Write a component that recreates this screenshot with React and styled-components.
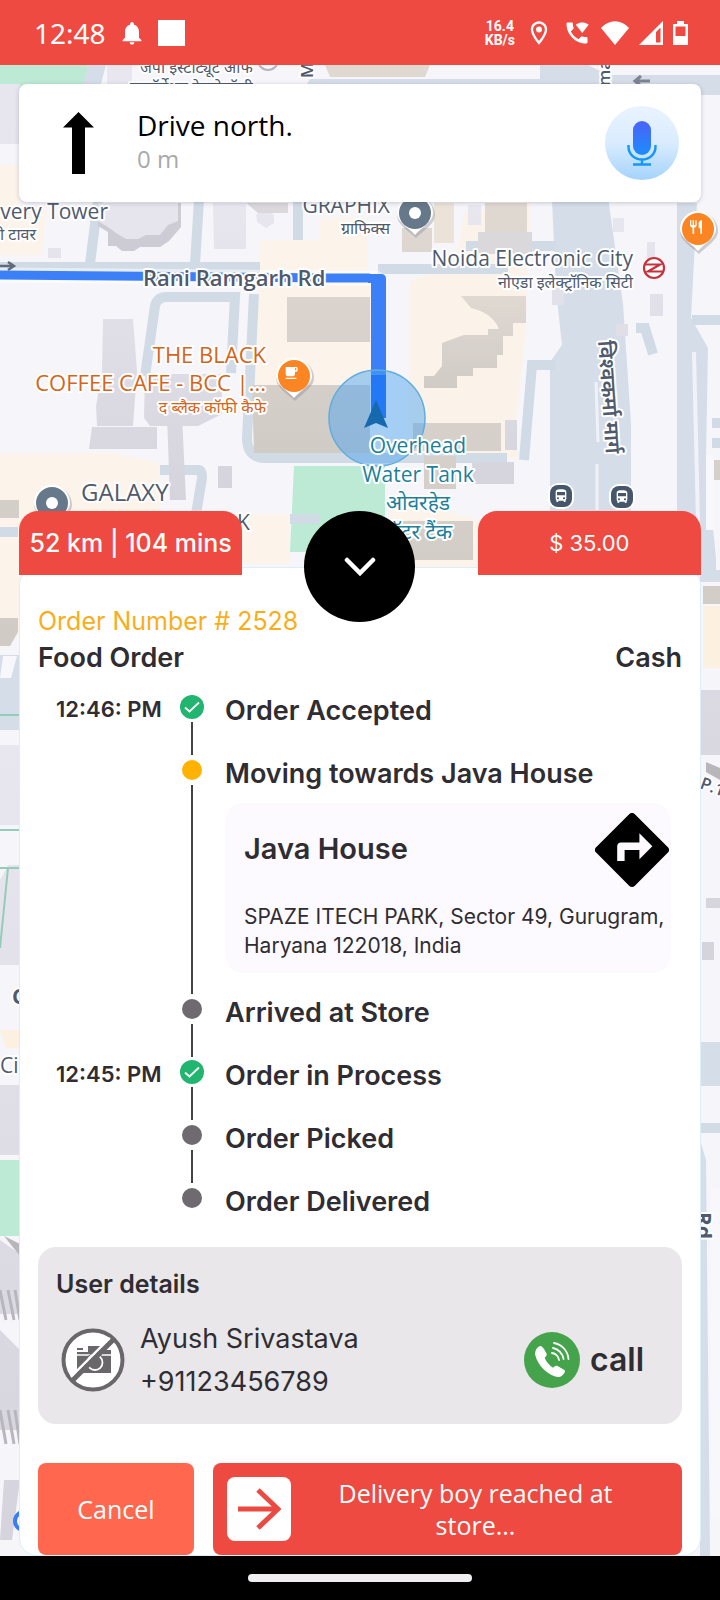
import React from 'react';
import styled, { createGlobalStyle, css } from 'styled-components';
import {
    MdNotifications,
    MdOutlineLocationOn,
    MdWifiCalling,
    MdLocalCafe,
    MdRestaurant,
    MdDirectionsBus,
} from 'react-icons/md';

const red = '#ef4a41';
const ink = '#2f2d32';
const uiFont = 'Inter, "Noto Sans", sans-serif';
const mapFont = '"Open Sans", "Noto Sans", "Noto Sans Devanagari", sans-serif';

const GlobalStyle = createGlobalStyle`
    * {
        box-sizing: border-box;
    }
    body {
        margin: 0;
        background: black;
        color: ${ink};
        font-family: ${uiFont};
    }
    button {
        border: none;
        padding: 0;
        background: none;
        font: inherit;
        color: inherit;
        cursor: pointer;
    }
    h2, h3, h4, p, ol {
        margin: 0;
        padding: 0;
    }
    svg {
        display: block;
    }
`

const Screen = styled.div`
    min-height: 100vh;
    display: flex;
    flex-direction: column;
`

/* status bar */

const StatusBar = styled.header`
    height: 65px;
    padding: 0 32px 0 34px;
    display: flex;
    align-items: center;
    justify-content: space-between;
    background: ${red};
    color: white;
`

const StatusGroup = styled.div`
    display: flex;
    align-items: center;
    gap: ${props => props.$gap}px;
`

const Clock = styled.time`
    font-family: "Noto Sans", sans-serif;
    font-size: 28px;
    line-height: 32px;
`

const WhiteSquare = styled.span`
    width: 27px;
    height: 26px;
    background: white;
`

const NetSpeed = styled.div`
    font-family: Roboto, sans-serif;
    font-size: 14px;
    line-height: 14px;
    font-weight: 700;
    text-align: center;
`

/* map and what floats on it */

const Stage = styled.main`
    flex: 1;
    display: grid;
    grid-template-columns: minmax(0, 1fr);
    overflow: hidden;
`

const MapCanvas = styled.svg`
    grid-area: 1 / 1;
    width: 100%;
    height: 0;
    min-height: 100%;
    font-family: ${mapFont};
`

const MapText = styled.text`
    fill: ${props => props.$color || '#4f5a6c'};
    font-size: ${props => props.$size || 21}px;
    font-weight: ${props => props.$weight || 400};
    stroke: white;
    stroke-width: 4px;
    stroke-linejoin: round;
    paint-order: stroke;
`

const Overlay = styled.div`
    grid-area: 1 / 1;
    z-index: 1;
    padding: 19px 19px 0;
    display: flex;
    flex-direction: column;
    justify-content: space-between;
    gap: 200px;
`

const DirectionCard = styled.section`
    height: 118px;
    padding: 0 22px 0 44px;
    display: flex;
    align-items: center;
    border-radius: 8px;
    background: white;
    box-shadow: 0 1px 4px rgba(60, 60, 80, 0.25);
`

const DirectionText = styled.div`
    flex: 1;
    margin-left: 43px;
    padding-bottom: 5px;
`

const Direction = styled.h2`
    color: black;
    font-family: "Open Sans", sans-serif;
    font-size: 28px;
    line-height: 36px;
    font-weight: 400;
`

const Distance = styled.p`
    color: #aaa9ad;
    font-family: "Open Sans", sans-serif;
    font-size: 24px;
    line-height: 32px;
`

/* bottom sheet */

const TabRow = styled.div`
    position: relative;
    z-index: 1;
    height: 64px;
    margin-bottom: -8px;
    display: grid;
    grid-template-columns: 1fr 1fr 1fr;
    gap: 6px;
    justify-items: center;
`

const Tab = styled.div`
    width: 100%;
    height: 64px;
    border-radius: 19px 19px 0 0;
    display: flex;
    align-items: center;
    justify-content: center;
    background: ${red};
    color: white;
    font-size: ${props => props.$size}px;
    line-height: 32px;
    font-weight: ${props => props.$weight};
    white-space: nowrap;
`

const CollapseButton = styled.button`
    width: 111px;
    height: 111px;
    border-radius: 50%;
    display: flex;
    align-items: center;
    justify-content: center;
    background: black;
`

const Sheet = styled.section`
    padding: 35px 18px 0;
    border: 1px solid #dceefa;
    border-radius: 18px;
    background: white;
`

const OrderNumber = styled.h2`
    color: #f9ae19;
    font-size: 25px;
    line-height: 36px;
    font-weight: 400;
`

const OrderMeta = styled.div`
    display: flex;
    justify-content: space-between;
    font-size: 27px;
    line-height: 38px;
    font-weight: 600;
`

const Timeline = styled.ol`
    margin-top: 15px;
    padding: 0 11px 0 18px;
    list-style: none;
`

const Step = styled.li`
    min-height: ${props => (props.$last ? 48 : 63)}px;
    display: grid;
    grid-template-columns: 112px 47px minmax(0, 1fr);
`

const StepTime = styled.time`
    padding-top: 1px;
    font-size: 22px;
    line-height: 32px;
    font-weight: 600;
    white-space: nowrap;
`

const StepRail = styled.div`
    display: flex;
    flex-direction: column;
    align-items: center;
`

const MarkerSlot = styled.div`
    height: 30px;
    display: flex;
    align-items: center;
`

const Dot = styled.span`
    width: 20px;
    height: 20px;
    border-radius: 50%;
    background: ${props => props.$color};
`

const RailLine = styled.span`
    flex: 1;
    width: 2px;
    background: #444247;
`

const StepBody = styled.div`
    padding-left: 10px;
`

const StepTitle = styled.h3`
    font-size: 27px;
    line-height: 38px;
    font-weight: 600;
`

const StoreCard = styled.div`
    margin: 10px 0 21px;
    padding: 10px 2px 13px 19px;
    border-radius: 18px;
    background: #fcfaff;
`

const StoreHead = styled.div`
    display: flex;
    align-items: center;
    justify-content: space-between;
`

const StoreName = styled.h4`
    padding-bottom: 3px;
    font-size: 29px;
    line-height: 38px;
    font-weight: 600;
`

const StoreAddress = styled.p`
    margin-top: 15px;
    font-size: 21px;
    line-height: 29px;
`

const UserCard = styled.section`
    margin-top: 16px;
    padding: 18px 38px 21px 18px;
    border-radius: 18px;
    background: #e9e7ea;
`

const UserHeading = styled.h3`
    font-size: 25px;
    line-height: 38px;
    font-weight: 600;
`

const UserRow = styled.div`
    margin-top: 14px;
    padding-left: 5px;
    display: flex;
    align-items: center;
`

const UserText = styled.div`
    flex: 1;
    padding-left: 15px;
    font-size: 27px;
    line-height: 43px;
`

const CallButton = styled.button`
    display: flex;
    align-items: center;
    gap: 10px;
    font-size: 32px;
    line-height: 36px;
    font-weight: 600;
`

const Actions = styled.div`
    margin-top: 39px;
    display: grid;
    grid-template-columns: 156fr 469fr;
    gap: 19px;
`

const actionStyle = css`
    height: 92px;
    border-radius: 8px;
    color: white;
    font-family: "Open Sans", sans-serif;
    font-size: 25px;
    line-height: 32px;
`

const CancelButton = styled.button`
    ${actionStyle}
    background: #ff674f;
`

const ReachedButton = styled.button`
    ${actionStyle}
    padding: 0 14px;
    display: flex;
    align-items: center;
    background: ${red};
`

const ArrowBox = styled.span`
    width: 64px;
    height: 64px;
    border-radius: 8px;
    display: flex;
    align-items: center;
    justify-content: center;
    background: white;
`

const ReachedLabel = styled.span`
    flex: 1;
    padding: 0 40px 0 32px;
`

const SystemNav = styled.footer`
    height: 44px;
    display: flex;
    align-items: center;
    justify-content: center;
    background: black;
`

const HomePill = styled.span`
    width: 31%;
    height: 8px;
    border-radius: 4px;
    background: #f0eef1;
`

const WifiIcon = () => (
    <svg width="28" height="24" viewBox="0 0 28 24">
        <path d="M0 7C8-2 20-2 28 7L14 24z" fill="white" />
    </svg>
)

const SignalIcon = () => (
    <svg width="24" height="24" viewBox="0 0 24 24">
        <path d="M24 0v24H0zM21.500 6.500L17 11v10.500h4.500z" fill="white" fillRule="evenodd" />
    </svg>
)

const BatteryIcon = () => (
    <svg width="15" height="24" viewBox="0 0 15 24">
        <path d="M4 0h7v3h4v21H0V3h4zM2.500 5.500V15h10V5.500z" fill="white" fillRule="evenodd" />
    </svg>
)

const UpArrow = () => (
    <svg width="31" height="62" viewBox="0 0 31 62">
        <path d="M15.500 0L31 15.500H22V62H9V15.500H0z" />
    </svg>
)

const MicIcon = () => (
    <svg width="74" height="74" viewBox="0 0 74 74" role="img" aria-label="Microphone">
        <defs>
            <linearGradient id="halo" x1="0" y1="0" x2="0" y2="1">
                <stop offset="0" stopColor="#e9f3fe" />
                <stop offset="0.5" stopColor="#d9ecfe" />
                <stop offset="1" stopColor="#a5d3fc" />
            </linearGradient>
            <linearGradient id="capsule" x1="0" y1="0" x2="0" y2="1">
                <stop offset="0" stopColor="#4b62f8" />
                <stop offset="1" stopColor="#1b8dfd" />
            </linearGradient>
        </defs>
        <circle cx="37" cy="37" r="37" fill="url(#halo)" />
        <rect x="28" y="15" width="18" height="34" rx="9" fill="url(#capsule)" />
        <path d="M23.500 39v2a13.500 12.500 0 0 0 27 0v-2M37 53.500v5M28 58.500h18" fill="none" stroke="#1496fb" strokeWidth="2.400" />
    </svg>
)

const Chevron = () => (
    <svg width="34" height="20" viewBox="0 0 34 20">
        <path d="M4 3l13 13L30 3" fill="none" stroke="white" strokeWidth="4.500" strokeLinecap="round" />
    </svg>
)

const CheckMarker = () => (
    <svg width="24" height="24" viewBox="0 0 24 24">
        <circle cx="12" cy="12" r="12" fill="#22b56f" />
        <path d="M5 12.500l4.500 4L19 7.500" fill="none" stroke="white" strokeWidth="1.800" />
    </svg>
)

const TurnIcon = () => (
    <svg width="74" height="74" viewBox="2 2 20 20">
        <path d="M21.710 11.290l-9-9a.996.996 0 0 0-1.410 0l-9 9a.996.996 0 0 0 0 1.410l9 9c.390.390 1.020.390 1.410 0l9-9a.996.996 0 0 0 0-1.410zM14 14.500V12h-4v3H8v-4c0-.550.450-1 1-1h5V7.500l3.500 3.500-3.500 3.500z" />
    </svg>
)

const NoPhoto = () => (
    <svg width="64" height="64" viewBox="0 0 64 64" role="img" aria-label="No photo">
        <circle cx="32" cy="32" r="29.500" fill="white" stroke="#69676a" strokeWidth="4" />
        <path d="M16 22h6v-2h-6zM27 18h14v4h9v23H16V24h11z" fill="#69676a" />
        <path d="M16 27h34" stroke="white" strokeWidth="1.500" />
        <circle cx="34" cy="34.500" r="9.500" fill="#69676a" />
        <circle cx="34" cy="34.500" r="7.500" fill="#69676a" stroke="white" strokeWidth="1.800" />
        <path d="M10 49L49 10" stroke="white" strokeWidth="2.500" />
        <path d="M12 52L52 12" stroke="#69676a" strokeWidth="5" />
    </svg>
)

const CallIcon = () => (
    <svg width="56" height="56" viewBox="0 0 56 56">
        <circle cx="28" cy="28" r="28" fill="#45a44b" />
        <path
            d="M15 14.500c2-1.500 4 0 7.500 7 .8 1.700-.5 2.700-1.800 4.200 1.500 4 4.500 7.500 8.300 10 1.800-1.700 2.800-2.600 4.500-1.700l6.500 3.800c2 1.300.5 3.200-1 5-2 2.300-5 3-8.500 1.500C21 40.500 14 32.500 11.500 24c-1-4 .500-7.500 3.500-9.500z"
            fill="white"
        />
        <path d="M28 21a8 8 0 0 1 7 7M29 16a13 13 0 0 1 10.500 11M30 11a17.500 17.500 0 0 1 14.500 16" fill="none" stroke="white" strokeWidth="1.800" strokeLinecap="round" />
    </svg>
)

const ArrowRight = () => (
    <svg width="44" height="42" viewBox="0 0 44 42">
        <path d="M1 21h40M21 2l20 19-20 19" fill="none" stroke="#ea4a41" strokeWidth="5" />
    </svg>
)

const MapPin = ({ x, y, color, children }) => (
    <g transform={`translate(${x} ${y})`}>
        <path d="M-19 0a19 19 0 1 1 38 0c0 9-10 14-19 23C-10 14-19 9-19 0z" fill="#8c8c96" opacity="0.400" transform="translate(1 2)" />
        <path d="M-18 0a18 18 0 1 1 36 0c0 9-10 13-18 22C-8 13-18 9-18 0z" fill="white" />
        <circle r="16" fill={color} />
        {children}
    </g>
)

const Busstop = ({ x, y }) => (
    <g transform={`translate(${x} ${y})`}>
        <rect x="-13" y="-13" width="26" height="26" rx="10" fill="white" />
        <rect x="-11" y="-11" width="22" height="22" rx="8" fill="#46576b" />
        <MdDirectionsBus x="-8" y="-8" width="16" height="16" color="white" />
    </g>
)

const CityMap = () => (
    <MapCanvas viewBox="0 65 720 1491" preserveAspectRatio="xMidYMin slice">
        <defs>
            <linearGradient id="lilac" x1="0" y1="0" x2="0" y2="1">
                <stop offset="0" stopColor="#e8e7f0" />
                <stop offset="1" stopColor="#d5d4dd" />
            </linearGradient>
            <linearGradient id="sand" x1="0" y1="0" x2="0" y2="1">
                <stop offset="0" stopColor="#e0d9d2" />
                <stop offset="1" stopColor="#d1cbc6" />
            </linearGradient>
        </defs>
        <rect y="65" width="720" height="1491" fill="#f6f5fa" />

        {/* ground areas */}
        <g fill="#fcf4eb">
            <path d="M260 240h60v-22h48v60h10v105h-18l-108 4-2-5 8-95z" />
            <path d="M410 282l45-20 10-52h25v-10h40v32h-15l12 40-1 60-10 90 2 36-60 2-40-10h-10z" fill="#fbf3ea" />
            <path d="M0 165h20v40h27l-5 50H0zM0 453h112l48 10v50l-20 60-122 60H0zM240 514h50v50h-50z" />
            <path d="M400 500l80 20v50h-90v-60z" />
        </g>
        <g fill="#bdead5">
            <path d="M0 65h88l-5 30H0zM294 466h91v86H290zM0 1160h24v76H0z" />
        </g>

        {/* roads */}
        <g fill="#d5dde8">
            <path d="M88 65h18l-8 30H80zM310 79h230v16H300zM540 65h48l20 10h112v20H540zM551 84h60l-2 120 14 100 8 120v90h-81V362l12-17-6-55-4-90z" />
            <path d="M677 203h20l-6 115 17 30-2 110 10 100v12h-30l-9-60zM0 655h22v75H0z" />
            <path d="M700 570h20v12h-20zM700 1042h20v44h-20zM700 1140l6 20 4 396h-10z" />
        </g>
        <g fill="none" stroke="#d0dbe6" strokeWidth="10">
            <path d="M0 267h260M98 200l-8 64M199 200l-4 64M298 200v40M145 376l10-70q2-9 12-9h68l-4 76M254 294l-7 144q0 18 16 20h244M378 269h130M466 246h90M524 460l8-95h24M160 470h38q4 0 4 8l-6 36M290 519h30M636 328h9l8 26" />
            <path d="M0 532h18M692 320h28M712 423h8M712 443h8M700 1128h20" />
        </g>
        <path d="M596 382l2 60M597 464v46" stroke="#f1f2f7" strokeWidth="3" />
        <path d="M694 352l4 170" stroke="#f1f2f7" strokeWidth="4" />

        {/* white lots */}
        <g fill="#f8f7fb">
            <path d="M706 455h8v75h-8zM711 1188h9v330h-5q-4 0-4-6zM3 656h14l-6 22H0z" />
        </g>

        {/* buildings */}
        <path d="M98 203h83v24l-12 14-9 6h-20l-6 4h-12l-6-5h-8v-14l-10-6z" fill="#cdccd4" />
        <path d="M98 203h80v18l-10 4-8 10h-14l-8 4h-12l-10-6-8-6-10-6z" fill="#e6e5ee" />
        <g fill="url(#lilac)">
            <path d="M213 203h33v46h-32zM256 215l8-7 10 7v8l-8 5-9-6zM103 319h30l4 52-4 55h-36l-1-20 6-35zM92 427h65v22h-68zM145 374h77v40l-24 12h-48l-6-8zM167 415h15l4 85h-16z" />
            <path d="M472 462h42v22h-41zM468 205h13v20h-13zM505 420h12v30h-12zM613 218h11v14h-11zM650 294h13v22h-13zM647 242h8v17h-8zM616 324h12v12h-12zM552 285h12v20h-12zM218 466h14v22h-14zM48 248h13v10H48z" />
            <path d="M0 745h20v80H0zM0 880l8-15h12v100H0zM0 1085h20v70H0zM0 1240l20 14v60H0zM0 1330l20 20v80H0zM4 1480h16l-8 60H0z" />
            <path d="M107 65h25v20h-25zM0 84h20v60H0zM700 690h20v65h-20zM706 898h14v10h-14zM702 942h12v18h-12z" />
            <path d="M246 203h42v10h-30zM478 232h54v22h-54z" fill="#dbd8dc" />
        </g>
        <g fill="#fcf0e0">
            <path d="M703 606h17v62h-17zM0 1030h20v18H6z" />
        </g>
        <g fill="url(#sand)">
            <path d="M287 297h83v45h-83zM252 385h118v68H254zM402 228h30v24h-30zM485 203h42v29h-42z" />
            <path d="M434 203h20v40h-20z" fill="#ece3d8" />
            <path d="M461 296h65v27h-13v13h-12q-4-22-30-28zM442 343l22-8h24v-6h15v26h-6v13h-24v8h-16v12h-33v-12h10l8-10z" />
            <path d="M413 423h88v28h-88zM424 456h32v33h-32zM395 521h78v39h-90zM325 65h105l-5 12h-95zM0 500h19v18H0zM703 586h17v18h-17zM714 480h6v-20h-6zM0 618h18v14l-8 14H0z" />
        </g>
        <g fill="#b9b6ba">
            <path d="M706 762l14 6v12l-14-8zM4 1236l16 20v-12z" />
        </g>
        <path d="M0 715h20M0 830h20M0 868h20M8 868l-8 80" stroke="#93ccb8" strokeWidth="2" fill="none" />
        <path d="M0 1290l6 30M8 1290l6 30M15 1290l5 30M0 1410l6 34M8 1410l6 34M15 1410l5 34" stroke="#b8b6bc" strokeWidth="3" />

        {/* route */}
        <path d="M0 275L330 278h44q5 0 5 5v130" fill="none" stroke="#fff" strokeWidth="15" opacity="0.500" />
        <path d="M0 275L330 278h40" fill="none" stroke="#3b80f7" strokeWidth="9" />
        <path d="M368 274h13q5 0 5 5v138h-15V283h-3z" fill="#3b80f7" />
        <circle cx="377" cy="418" r="48" fill="#4ba4ee" fillOpacity="0.480" stroke="#5faedd" strokeWidth="1.500" />
        <path d="M371 375h15v43h-15z" fill="#2578f5" />
        <path d="M376 400l12 28-12-5-12 5z" fill="#1769ad" />
        <path d="M0 266h14M8 262l6 4-6 4" stroke="#5f6a7a" strokeWidth="2.500" fill="none" />
        <path d="M650 81h-14M641 76l-6 5 6 5" stroke="#7a8493" strokeWidth="3" fill="none" />

        {/* places */}
        <MapText x="140" y="73" $size="16">जेपी इंस्टीट्यूट ऑफ</MapText>
        <MapText x="130" y="93" $size="16">इन्फॉर्मेशन टेक्नोलॉजी</MapText>
        <circle cx="268" cy="60" r="10" fill="#f8f7fb" stroke="#b2b4bd" strokeWidth="2" />
        <MapText transform="translate(313 78) rotate(-90)" $size="17" $weight="600">M</MapText>
        <MapText transform="translate(610 86) rotate(-90)" $size="17" $weight="600">ma</MapText>
        <MapText x="108" y="219" textAnchor="end">overy Tower</MapText>
        <MapText x="36" y="240" textAnchor="end" $size="16">ी टावर</MapText>
        <MapText x="390" y="213" textAnchor="end">GRAPHIX</MapText>
        <MapText x="390" y="234" textAnchor="end" $size="16">ग्राफिक्स</MapText>
        <MapText x="143" y="286" $size="22" $weight="600">Rani Ramgarh Rd</MapText>
        <MapText x="633" y="266" textAnchor="end">Noida Electronic City</MapText>
        <MapText x="633" y="288" textAnchor="end" $size="16">नोएडा इलेक्ट्रॉनिक सिटी</MapText>
        <MapText x="266" y="363" textAnchor="end" $size="22" $color="#d4651a">THE BLACK</MapText>
        <MapText x="266" y="391" textAnchor="end" $size="22" $color="#d4651a">COFFEE CAFE - BCC |...</MapText>
        <MapText x="266" y="413" textAnchor="end" $size="16" $color="#d4651a">द ब्लैक कॉफी कैफे</MapText>
        <MapText x="81" y="501" $size="24">GALAXY</MapText>
        <MapText x="237" y="530">K</MapText>
        <MapText x="418" y="453" textAnchor="middle" $color="#1f7f9b">Overhead</MapText>
        <MapText x="418" y="482" textAnchor="middle" $color="#1f7f9b">Water Tank</MapText>
        <MapText x="418" y="510" textAnchor="middle" $size="21" $color="#1f7f9b">ओवरहेड</MapText>
        <MapText x="418" y="539" textAnchor="middle" $size="21" $color="#1f7f9b">वॉटर टैंक</MapText>
        <MapText transform="translate(598 341) rotate(86)" $size="21" $weight="600">विश्वकर्मा मार्ग</MapText>
        <MapText x="0" y="1073">Ci</MapText>
        <MapText x="12" y="1004" $weight="700">C</MapText>
        <MapText transform="translate(699 788) rotate(20)" $size="17" $weight="600">P.1</MapText>
        <MapText transform="translate(696 1212) rotate(90)" $weight="700">Rd</MapText>
        <circle cx="24" cy="1521" r="9" fill="white" stroke="#3b7df4" strokeWidth="4" />

        <MapPin x={415} y={213} color="#66798a"><circle r="6" fill="white" /></MapPin>
        <MapPin x={52} y={503} color="#66798a"><circle r="6" fill="white" /></MapPin>
        <MapPin x={294} y={376} color="#fb8522">
            <MdLocalCafe x="-11" y="-11" width="22" height="22" color="white" />
        </MapPin>
        <MapPin x={698} y={229} color="#fb8522">
            <MdRestaurant x="-10" y="-10" width="20" height="20" color="white" />
        </MapPin>
        <Busstop x={561} y={496} />
        <Busstop x={622} y={497} />
        <g transform="translate(654 268)" fill="none" stroke="#c5323c" strokeWidth="2.200">
            <circle r="10" fill="white" />
            <path d="M-10 -3.500H6L-6 3.500H10" />
        </g>
    </MapCanvas>
)

const steps = [
    { title: 'Order Accepted', time: '12:46: PM', state: 'done' },
    {
        title: 'Moving towards Java House',
        state: 'active',
        store: { name: 'Java House', address: 'SPAZE ITECH PARK, Sector 49, Gurugram, Haryana 122018, India' },
    },
    { title: 'Arrived at Store', state: 'waiting' },
    { title: 'Order in Process', time: '12:45: PM', state: 'done' },
    { title: 'Order Picked', state: 'waiting' },
    { title: 'Order Delivered', state: 'waiting' },
]

const OrderStep = ({ step, last }) => (
    <Step $last={last}>
        <StepTime>{step.time}</StepTime>
        <StepRail>
            <MarkerSlot>
                {step.state === 'done'
                    ? <CheckMarker />
                    : <Dot $color={step.state === 'active' ? '#ffb200' : '#6d6b6e'} />}
            </MarkerSlot>
            {!last && <RailLine />}
        </StepRail>
        <StepBody>
            <StepTitle>{step.title}</StepTitle>
            {step.store && (
                <StoreCard>
                    <StoreHead>
                        <StoreName>{step.store.name}</StoreName>
                        <button aria-label="Directions"><TurnIcon /></button>
                    </StoreHead>
                    <StoreAddress>{step.store.address}</StoreAddress>
                </StoreCard>
            )}
        </StepBody>
    </Step>
)

function App() {
    return (
        <Screen>
            <GlobalStyle />
            <StatusBar>
                <StatusGroup $gap={12}>
                    <Clock>12:48</Clock>
                    <MdNotifications size={28} />
                    <WhiteSquare />
                </StatusGroup>
                <StatusGroup $gap={10}>
                    <NetSpeed>16.4<br />KB/s</NetSpeed>
                    <MdOutlineLocationOn size={28} />
                    <MdWifiCalling size={28} />
                    <WifiIcon />
                    <SignalIcon />
                    <BatteryIcon />
                </StatusGroup>
            </StatusBar>
            <Stage>
                <CityMap />
                <Overlay>
                    <DirectionCard>
                        <UpArrow />
                        <DirectionText>
                            <Direction>Drive north.</Direction>
                            <Distance>0 m</Distance>
                        </DirectionText>
                        <button aria-label="Voice"><MicIcon /></button>
                    </DirectionCard>
                    <div>
                        <TabRow>
                            <Tab $size={25} $weight={500}>52 km | 104 mins</Tab>
                            <CollapseButton aria-label="Collapse"><Chevron /></CollapseButton>
                            <Tab $size={22} $weight={400}>$ 35.00</Tab>
                        </TabRow>
                        <Sheet>
                            <OrderNumber>Order Number # 2528</OrderNumber>
                            <OrderMeta>
                                <span>Food Order</span>
                                <span>Cash</span>
                            </OrderMeta>
                            <Timeline>
                                {steps.map((step, i) => (
                                    <OrderStep key={step.title} step={step} last={i === steps.length - 1} />
                                ))}
                            </Timeline>
                            <UserCard>
                                <UserHeading>User details</UserHeading>
                                <UserRow>
                                    <NoPhoto />
                                    <UserText>
                                        <p>Ayush Srivastava</p>
                                        <p>+91123456789</p>
                                    </UserText>
                                    <CallButton><CallIcon />call</CallButton>
                                </UserRow>
                            </UserCard>
                            <Actions>
                                <CancelButton>Cancel</CancelButton>
                                <ReachedButton>
                                    <ArrowBox><ArrowRight /></ArrowBox>
                                    <ReachedLabel>Delivery boy reached at store...</ReachedLabel>
                                </ReachedButton>
                            </Actions>
                        </Sheet>
                    </div>
                </Overlay>
            </Stage>
            <SystemNav><HomePill /></SystemNav>
        </Screen>
    );
}

export default App;
